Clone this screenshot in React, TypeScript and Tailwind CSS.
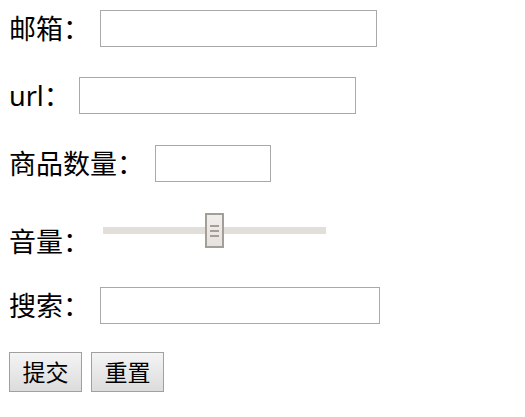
import React from 'react';

const labelFont = { fontFamily: '"Noto Sans", "Noto Sans CJK SC", sans-serif' };

const Field = ({ label, width, className, gap }: { label: string; width: string; className: string; gap: string }) => (
    <div className={`flex items-center ${className}`}>
        <span className="text-[27px] leading-none text-black">{label}</span>
        <input type="text" className={`${gap} h-[37px] ${width} border border-[#a9a9a9] bg-white outline-none`} />
    </div>
);

export default function App() {
    return (
        <div className="bg-white w-[525px] h-[417px] pl-[9px] pt-[10px]" style={labelFont}>
            <Field label="邮箱：" gap="ml-[10px]" width="w-[277px]" className="h-[37px]" />
            <Field label="url：" gap="ml-[8px]" width="w-[277px]" className="h-[37px] mt-[30px]" />
            <Field label="商品数量：" gap="ml-[11px]" width="w-[116px]" className="h-[37px] mt-[31px]" />

            <div className="flex items-end mt-[31px] h-[42px]">
                <span className="text-[27px] leading-none text-black">音量：</span>
                <div className="relative ml-[13px] mb-[7px] w-[223px] h-[35px] flex items-center">
                    <div className="w-full h-[7px] bg-[#e2ded9]" />
                    <div className="absolute left-[102px] top-0 w-[19px] h-[35px] border-2 border-[#a39e97] bg-gradient-to-b from-[#f1efec] to-[#e6e2dd] flex flex-col items-center justify-center gap-[3px]">
                        <div className="w-[9px] h-[2px] bg-[#a39e97]" />
                        <div className="w-[9px] h-[2px] bg-[#a39e97]" />
                        <div className="w-[9px] h-[2px] bg-[#a39e97]" />
                    </div>
                </div>
            </div>

            <Field label="搜索：" gap="ml-[10px]" width="w-[280px]" className="h-[37px] mt-[32px]" />

            <div className="flex gap-[9px] mt-[28px]">
                <button className="w-[73px] h-[40px] border border-[#a0a0a0] bg-gradient-to-b from-[#f4f4f4] to-[#dcdcdc] text-[23px] leading-none text-black">提交</button>
                <button className="w-[73px] h-[40px] border border-[#a0a0a0] bg-gradient-to-b from-[#f4f4f4] to-[#dcdcdc] text-[23px] leading-none text-black">重置</button>
            </div>
        </div>
    );
}
